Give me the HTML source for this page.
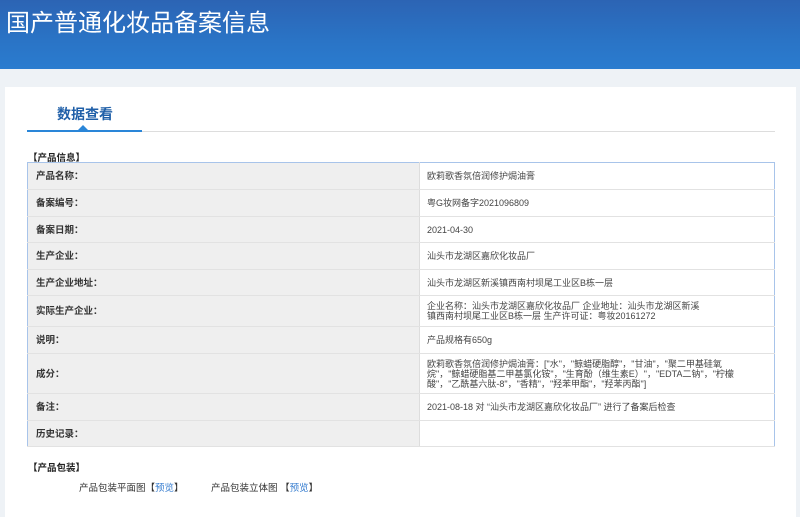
<!DOCTYPE html>
<html><head><meta charset="utf-8"><style>
*{margin:0;padding:0;box-sizing:border-box}
body{width:800px;height:507px;overflow:hidden;background:#eef2f6;font-family:"Liberation Sans","Noto Sans CJK SC",sans-serif;font-size:9px;color:#333;position:relative}
.hd{position:absolute;left:0;top:0;width:800px;height:69px;background:linear-gradient(180deg,#2c64b4 0%,#2a74c6 60%,#2a7ccf 100%)}
.hd h1{position:absolute;left:6px;top:3px;font-size:24px;font-weight:normal;color:#fff;letter-spacing:0px}
.card{position:absolute;left:5px;top:87px;width:791px;height:430px;background:#fff}
.tab{position:absolute;left:52px;top:17px;font-size:14px;font-weight:bold;color:#1f5fa8}
.tline{position:absolute;left:22px;top:44px;width:748px;height:1px;background:#ddd}
.tact{position:absolute;left:22px;top:43px;width:115px;height:2px;background:#2a86d8}
.tri{position:absolute;left:73px;top:38px;width:0;height:0;border-left:5px solid transparent;border-right:5px solid transparent;border-bottom:5px solid #2a86d8}
.sec{position:absolute;font-weight:bold;color:#222;font-size:9.5px}
table{position:absolute;left:22px;top:75px;width:748px;border-collapse:collapse;border:1px solid #a8c4ea}
td{border-bottom:1px solid #e2e2e2;vertical-align:middle;font-size:9px;line-height:10px}
td.l{width:392px;background:#efefef;font-weight:bold;padding-left:8px;padding-top:2px;border-right:1px solid #ddd;color:#333;font-size:9.5px;line-height:12px}
td.v{padding:0 7px;color:#444}
.p{position:absolute;top:393px;font-size:9.5px;color:#333}
.p a{color:#3a7fd0}
</style></head><body>
<div class="hd"><h1>国产普通化妆品备案信息</h1></div>
<div class="card">
<div class="tab">数据查看</div>
<div class="tline"></div><div class="tact"></div><div class="tri"></div>
<div class="sec" style="left:23px;top:63px">【产品信息】</div>
<table>
<tr style="height:27px"><td class="l">产品名称：</td><td class="v">欧莉歌香氛倍润修护焗油膏</td></tr>
<tr style="height:27px"><td class="l">备案编号：</td><td class="v">粤G妆网备字2021096809</td></tr>
<tr style="height:26px"><td class="l">备案日期：</td><td class="v">2021-04-30</td></tr>
<tr style="height:27px"><td class="l">生产企业：</td><td class="v">汕头市龙湖区嘉欣化妆品厂</td></tr>
<tr style="height:26px"><td class="l">生产企业地址：</td><td class="v">汕头市龙湖区新溪镇西南村坝尾工业区B栋一层</td></tr>
<tr style="height:31px"><td class="l">实际生产企业：</td><td class="v">企业名称：汕头市龙湖区嘉欣化妆品厂 企业地址：汕头市龙湖区新溪<br>镇西南村坝尾工业区B栋一层 生产许可证：粤妆20161272</td></tr>
<tr style="height:27px"><td class="l">说明：</td><td class="v">产品规格有650g</td></tr>
<tr style="height:40px"><td class="l">成分：</td><td class="v">欧莉歌香氛倍润修护焗油膏：["水"，"鲸蜡硬脂醇"，"甘油"，"聚二甲基硅氧<br>烷"，"鲸蜡硬脂基二甲基氯化铵"，"生育酚（维生素E）"，"EDTA二钠"，"柠檬<br>酸"，"乙酰基六肽-8"，"香精"，"羟苯甲酯"，"羟苯丙酯"]</td></tr>
<tr style="height:27px"><td class="l">备注：</td><td class="v">2021-08-18 对 “汕头市龙湖区嘉欣化妆品厂” 进行了备案后检查</td></tr>
<tr style="height:26px"><td class="l">历史记录：</td><td class="v"></td></tr>
</table>
<div class="sec" style="left:23px;top:373px">【产品包装】</div>
<div class="p" style="left:74px">产品包装平面图【<a>预览</a>】</div>
<div class="p" style="left:206px">产品包装立体图 【<a>预览</a>】</div>
</div>
</body></html>
